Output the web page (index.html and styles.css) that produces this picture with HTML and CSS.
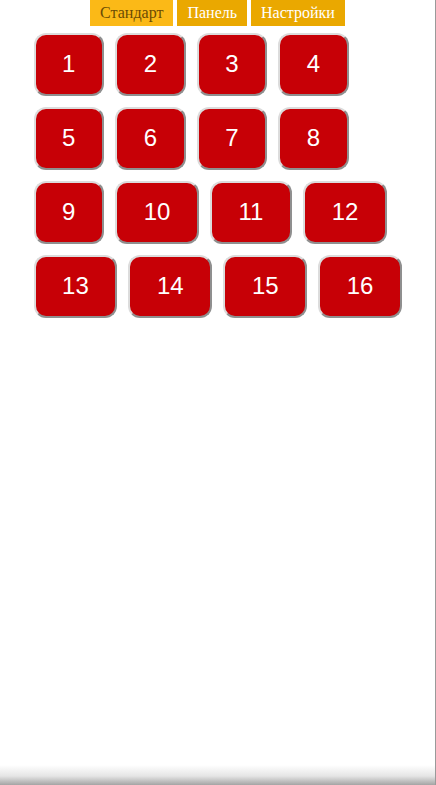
FILE: index.html
```html
<!DOCTYPE html>
<html lang="ru">
<head>
<meta charset="utf-8">
<title>Панель</title>
<link rel="stylesheet" href="styles.css">
</head>
<body>
<div class="page">
  <nav class="tabs">
    <a class="tab active">Стандарт</a>
    <a class="tab">Панель</a>
    <a class="tab">Настройки</a>
  </nav>
  <div class="grid">
    <div class="row">
      <button class="key">1</button>
      <button class="key">2</button>
      <button class="key">3</button>
      <button class="key">4</button>
    </div>
    <div class="row">
      <button class="key">5</button>
      <button class="key">6</button>
      <button class="key">7</button>
      <button class="key">8</button>
    </div>
    <div class="row">
      <button class="key">9</button>
      <button class="key">10</button>
      <button class="key">11</button>
      <button class="key">12</button>
    </div>
    <div class="row">
      <button class="key">13</button>
      <button class="key">14</button>
      <button class="key">15</button>
      <button class="key">16</button>
    </div>
  </div>
  <div class="spacer"></div>
  <div class="shade"></div>
</div>
</body>
</html>
```
FILE: styles.css
```css
html, body {
  margin: 0;
  padding: 0;
  background: #fff;
}
.page {
  width: 435px;
  height: 785px;
  border-right: 1px solid #9a9a9a;
  display: flex;
  flex-direction: column;
  font-family: "Liberation Serif", serif;
}
.tabs {
  display: flex;
  justify-content: center;
  gap: 4px;
}
.tab {
  display: block;
  height: 26px;
  line-height: 25px;
  padding: 0 10px;
  font-size: 16px;
  background: #eaa800;
  color: #fff;
}
.tab.active {
  background: #fbb917;
  color: #6a4b05;
}
.grid {
  display: flex;
  flex-direction: column;
  gap: 11px;
  padding: 7px 0 0 33.5px;
}
.row {
  display: flex;
  gap: 11px;
}
.key {
  height: 63px;
  padding: 0 26.6px 1px;
  margin: 0;
  font-family: "Liberation Sans", Arial, sans-serif;
  font-size: 24px;
  color: #fff;
  background: #c70006;
  border: 2px solid;
  border-color: #dcdcdc #8f8f8f #8f8f8f #dcdcdc;
  border-radius: 12px;
  line-height: 1;
}
.spacer {
  flex: 1;
}
.shade {
  height: 20px;
  background: linear-gradient(to bottom, rgba(255,255,255,0), rgba(190,190,190,0.4) 55%, #a4a4a4);
}
```
